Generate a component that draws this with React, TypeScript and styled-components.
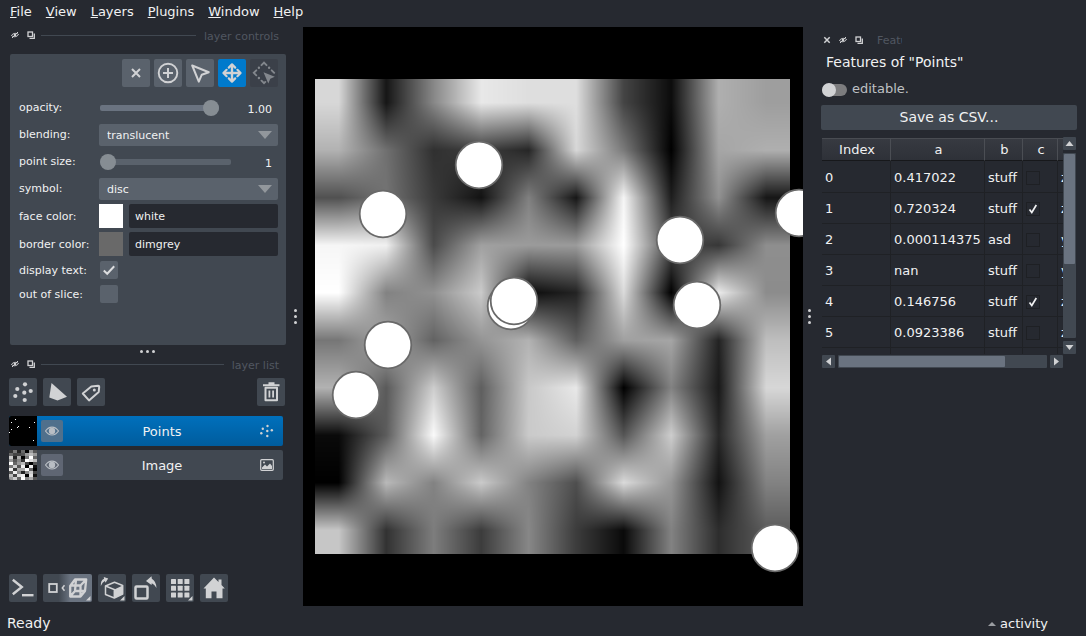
import React, { useLayoutEffect, useRef } from "react";
import styled, { createGlobalStyle, css } from "styled-components";

const c = {
  background: "#262930",
  foreground: "#414851",
  primary: "#5a626c",
  highlight: "#6a7380",
  text: "#f0f1f2",
  icon: "#d1d2d4",
  current: "#007acc",
  muted: "#515761",
};

const GlobalStyle = createGlobalStyle`
  *, *::before, *::after { box-sizing: border-box; }
  body {
    margin: 0;
    background: ${c.background};
    color: ${c.text};
    font: 13px/16px "DejaVu Sans", sans-serif;
  }
  button, input, select { font: inherit; color: inherit; margin: 0; }
  svg { display: block; }
`;

const Window = styled.div`
  display: flex;
  flex-direction: column;
  min-height: 100vh;
`;

const MenuBar = styled.nav`
  display: flex;
  height: 27px;
  padding: 3px 3px 6px;
`;

const MenuItem = styled.button`
  border: 0;
  padding: 0 7px;
  background: none;
  line-height: 18px;
`;

const Body = styled.main`
  flex: 1;
  display: flex;
`;

const Dock = styled.aside`
  flex: none;
  width: 289px;
  display: flex;
  flex-direction: column;
`;

const Handle = styled.div<{ $horizontal?: boolean }>`
  flex: none;
  display: flex;
  flex-direction: ${(p) => (p.$horizontal ? "row" : "column")};
  align-items: center;
  justify-content: center;
  gap: 3px;
  ${(p) => (p.$horizontal ? css`height: 11px; padding: 1px 0 0 5px;` : css`width: 14px; padding-right: 1px;`)}
`;

const Dot = styled.span`
  width: 3px;
  height: 3px;
  border-radius: 50%;
  background: ${c.icon};
`;

const TitleBar = styled.header`
  display: flex;
  align-items: center;
  height: 16px;
  padding: 0 10px;
  gap: 6px;
  color: ${c.muted};
  font-size: 11px;
`;

const TitleButton = styled.button`
  width: 10px;
  height: 10px;
  padding: 0;
  border: 0;
  background: none;
`;

const TitleLine = styled.span`
  flex: 1;
  height: 1px;
  margin: 0 2px 0 -1px;
  background: ${c.foreground};
`;

const TitleText = styled.span`
  padding-top: 3px;
`;

const Controls = styled.section`
  margin: 11px 3px 0 10px;
  padding: 5px 8px 41px 9px;
  border-radius: 2px;
  background: ${c.foreground};
  font-size: 11px;
`;

const ModeButtons = styled.div`
  display: flex;
  justify-content: flex-end;
  gap: 4px;
  margin-bottom: 9px;
`;

const ToolButton = styled.button<{ $tone?: "mode" | "active" | "disabled" | "split" }>`
  position: relative;
  flex: none;
  width: ${(p) => (p.$tone === "split" ? 49 : 28)}px;
  height: 28px;
  padding: 0;
  border: 0;
  border-radius: 2px;
  background: ${(p) =>
    p.$tone === "mode" ? c.primary
    : p.$tone === "active" ? c.current
    : p.$tone === "disabled" ? "#3b4049"
    : p.$tone === "split" ? `linear-gradient(90deg, ${c.foreground} 32%, ${c.highlight} 56%)`
    : c.foreground};
  color: ${(p) => (p.$tone === "disabled" ? "#83878d" : c.icon)};
`;

const Form = styled.div`
  display: grid;
  grid-template-columns: 80px minmax(0, 1fr);
  grid-template-rows: repeat(4, 23px) repeat(2, 24px) repeat(2, 20px);
  row-gap: 4px;
  align-items: center;
`;

const FieldLabel = styled.label`
  padding-top: 1px;
`;

const SliderRow = styled.div`
  display: flex;
  align-items: center;
  padding-left: 1px;
`;

const Slider = styled.input<{ $filled?: boolean }>`
  appearance: none;
  flex: 1;
  min-width: 0;
  height: 16px;
  background: none;
  &::-webkit-slider-runnable-track {
    height: 6px;
    border-radius: 2px;
    background: ${(p) => (p.$filled ? c.highlight : c.primary)};
  }
  &::-webkit-slider-thumb {
    appearance: none;
    width: 16px;
    height: 16px;
    margin-top: -5px;
    border-radius: 50%;
    background: #868d93;
  }
`;

const SliderValue = styled.output<{ $wide?: boolean }>`
  flex: none;
  width: ${(p) => (p.$wide ? 59 : 47)}px;
  padding: 5px 6px 0 0;
  text-align: right;
`;

const SelectWrap = styled.div`
  position: relative;
  align-self: end;
  height: 22px;
  &::after {
    content: "";
    position: absolute;
    right: 6px;
    top: 7px;
    border: 7px solid transparent;
    border-top: 8px solid #92979c;
    border-bottom: 0;
    pointer-events: none;
  }
`;

const Select = styled.select`
  appearance: none;
  width: 100%;
  height: 22px;
  padding: 1px 8px 0;
  border: 0;
  border-radius: 2px;
  background: ${c.primary};
`;

const ColorRow = styled.div`
  display: flex;
  gap: 6px;
`;

const Swatch = styled.button<{ $color: string }>`
  flex: none;
  width: 24px;
  height: 24px;
  padding: 0;
  border: 0;
  background: ${(p) => p.$color};
`;

const TextInput = styled.input`
  flex: 1;
  min-width: 0;
  height: 24px;
  padding: 0 6px;
  border: 0;
  border-radius: 2px;
  background: ${c.background};
`;

const TickWrap = styled.span<{ $cell?: boolean }>`
  position: relative;
  display: block;
  width: ${(p) => (p.$cell ? 14 : 18)}px;
  height: ${(p) => (p.$cell ? 14 : 18)}px;
  margin-left: ${(p) => (p.$cell ? 0 : 1)}px;
  svg { position: absolute; inset: 0; pointer-events: none; }
  input {
    appearance: none;
    display: block;
    width: 100%;
    height: 100%;
    border-radius: ${(p) => (p.$cell ? 0 : 2)}px;
    border: ${(p) => (p.$cell ? "1px solid #1e2024" : "0")};
    background: ${(p) => (p.$cell ? "transparent" : c.primary)};
  }
`;

const LayerTools = styled.div`
  display: flex;
  gap: 6px;
  margin: 6px 4px 10px 9px;
  > :last-child { margin-left: auto; }
`;

const LayerList = styled.ul`
  display: flex;
  flex-direction: column;
  gap: 4px;
  margin: 0 6px auto 9px;
  padding: 0;
  list-style: none;
`;

const LayerRow = styled.li<{ $selected?: boolean }>`
  display: flex;
  align-items: center;
  height: 30px;
  padding-right: 9px;
  border-radius: 2px;
  overflow: hidden;
  background: ${(p) => (p.$selected ? "linear-gradient(#0070bc, #005c9d)" : c.foreground)};
`;

const EyeButton = styled.button<{ $selected?: boolean }>`
  width: 22px;
  height: 22px;
  margin-left: 4px;
  padding: 0;
  border: 0;
  border-radius: 2px;
  background: ${(p) => (p.$selected ? "#50708c" : "#5f6673")};
  color: #b9bec4;
`;

const LayerName = styled.span`
  flex: 1;
  padding: 2px 0 0 1px;
  text-align: center;
`;

const ViewerButtons = styled.div`
  display: flex;
  gap: 6px;
  padding: 0 9px 4px;
`;

const Viewport = styled.section`
  flex: 1;
  min-width: 0;
  display: flex;
  align-items: center;
  justify-content: center;
  padding-right: 1px;
  background: #000;
  overflow: hidden;
`;

const Scene = styled.div`
  position: relative;
  flex: none;
  width: 475px;
  height: 475px;
  canvas { display: block; width: 100%; height: 100%; }
  svg { position: absolute; inset: 0; overflow: visible; }
`;

const Features = styled.aside`
  flex: none;
  width: 269px;
  padding: 5px 9px 0 4px;
`;

const FeaturesTitle = styled(TitleBar)`
  padding: 0;
  padding-left: 1px;
`;

const ClippedTitle = styled.span`
  width: 25px;
  margin-left: 7px;
  padding-top: 1px;
  overflow: hidden;
  white-space: nowrap;
`;

const Heading = styled.h1`
  margin: 6px 0 10px 5px;
  font-size: 14px;
  line-height: 16px;
  font-weight: 400;
`;

const ToggleLabel = styled.label`
  display: flex;
  align-items: center;
  gap: 5px;
  height: 18px;
  padding-left: 1px;
  color: #bfc1c4;
`;

const Toggle = styled.input`
  appearance: none;
  display: flex;
  align-items: center;
  width: 25px;
  height: 12px;
  margin-top: 2px;
  border-radius: 6px;
  background: #7c7c7e;
  &::before {
    content: "";
    width: 14px;
    height: 14px;
    flex: none;
    border-radius: 50%;
    background: ${c.icon};
  }
`;

const SaveButton = styled.button`
  display: block;
  width: 100%;
  height: 25px;
  margin: 7px 0;
  padding: 0 0 1px;
  border: 0;
  border-radius: 2px;
  background: ${c.foreground};
  font-size: 14px;
`;

const TableFrame = styled.div`
  display: grid;
  grid-template-columns: minmax(0, 1fr) 14px;
  grid-template-rows: 217px 14px;
  padding-left: 1px;
`;

const TableView = styled.div`
  overflow: hidden;
  padding-top: 1px;
`;

const Table = styled.table`
  table-layout: fixed;
  width: 300px;
  border-collapse: separate;
  border-spacing: 0;
  th, td {
    border-right: 1px solid #1f2125;
    border-bottom: 1px solid #1f2125;
    font-weight: 400;
    white-space: nowrap;
  }
  th {
    height: 23px;
    padding: 0 0 0 2px;
    border-top: 1px solid #494c52;
    border-right-color: #4b4e54;
    border-bottom-color: #17181b;
    background: linear-gradient(#373a41, #2e3138);
  }
  td { height: 31px; padding: 2px 0 0 3px; }
  tbody tr:first-child td { height: 32px; padding-top: 3px; }
`;

const Bar = styled.div<{ $vertical?: boolean }>`
  display: flex;
  flex-direction: ${(p) => (p.$vertical ? "column" : "row")};
  gap: 3px;
  padding-top: ${(p) => (p.$vertical ? 0 : 1)}px;
`;

const BarButton = styled.button`
  flex: none;
  width: 13px;
  height: 13px;
  padding: 0;
  border: 0;
  border-radius: 1px;
  background: ${c.foreground};
  color: ${c.icon};
`;

const BarTrack = styled.div<{ $vertical?: boolean }>`
  flex: 1;
  padding: 1px;
  background: ${c.foreground};
  border-radius: 1px;
  ${(p) => (p.$vertical ? css`width: 13px;` : css`height: 13px;`)}
  &::before {
    content: "";
    display: block;
    width: ${(p) => (p.$vertical ? "100%" : "80%")};
    height: ${(p) => (p.$vertical ? "60%" : "100%")};
    border-radius: 1px;
    background: ${c.highlight};
  }
`;

const StatusBar = styled.footer`
  display: flex;
  align-items: center;
  justify-content: space-between;
  height: 30px;
  padding: 4px 38px 0 7px;
  font-size: 14px;
`;

const Activity = styled.button`
  display: flex;
  align-items: center;
  gap: 4px;
  padding: 1px 0 0;
  border: 0;
  background: none;
  font-size: 13px;
  &::before {
    content: "";
    border: 4px solid transparent;
    border-bottom-color: #9a9da1;
    border-top: 0;
  }
`;

/* ---------- icons ---------- */

type IconProps = { w?: number; h?: number; children: React.ReactNode };

const Icon = ({ w = 28, h = 28, children }: IconProps) => (
  <svg width={w} height={h} viewBox={`0 0 ${w} ${h}`} fill="currentColor" aria-hidden="true">
    {children}
  </svg>
);

const line = { fill: "none", stroke: "currentColor", strokeWidth: 2 } as const;

const Corner = () => <path d="M26.500 22v4.500H22z" />;

const HideIcon = () => (
  <svg width="10" height="10" viewBox="0 0 10 10" fill="none" stroke={c.icon} aria-hidden="true">
    <path d="M1.500 5.500C3 3 6.500 2.700 8.500 4.500C7 7 3.500 7.500 1.500 5.500z" strokeWidth="1" />
    <circle cx="5" cy="5" r="1.300" fill={c.icon} stroke="none" />
    <path d="M2 8L8 2" strokeWidth="1" />
  </svg>
);

const FloatIcon = () => (
  <svg width="10" height="10" viewBox="0 0 10 10" fill="none" stroke={c.icon} aria-hidden="true">
    <rect x="2" y="2" width="4.500" height="4.500" strokeWidth="1.300" />
    <path d="M8.300 3.500V8.300H3.500" strokeWidth="1.300" />
  </svg>
);

const CloseIcon = () => (
  <svg width="10" height="10" viewBox="0 0 10 10" fill="none" stroke={c.icon} aria-hidden="true">
    <path d="M2.300 2.300L7.700 7.700M7.700 2.300L2.300 7.700" strokeWidth="1.500" />
  </svg>
);

const EyeIcon = () => (
  <Icon w={22} h={22}>
    <path d="M4.500 11C8 5.700 14 5.700 17.500 11C14 16.300 8 16.300 4.500 11z" {...line} strokeWidth={1.2} />
    <circle cx="11" cy="11" r="3.200" />
  </Icon>
);

const CheckIcon = ({ cell }: { cell?: boolean }) =>
  cell ? (
    <Icon w={14} h={14}>
      <path d="M3.500 7.500L5.800 10.500L10.300 3" {...line} stroke={c.text} strokeWidth={1.700} />
    </Icon>
  ) : (
    <Icon w={18} h={18}>
      <path d="M3.800 9.500L7.200 12.800L14.200 5.300" {...line} stroke="#dcdddf" strokeWidth={2} />
    </Icon>
  );

const TickBox = ({ id, label, on, cell }: { id?: string; label?: string; on?: boolean; cell?: boolean }) => (
  <TickWrap $cell={cell}>
    <input id={id} type="checkbox" defaultChecked={on} aria-label={label} />
    {on && <CheckIcon cell={cell} />}
  </TickWrap>
);

const Dots = () => (
  <>
    <Dot />
    <Dot />
    <Dot />
  </>
);

/* ---------- image layer ---------- */

const pixels = [
  [215, 22, 135, 232, 222, 222, 68, 12, 175, 158],
  [178, 112, 48, 62, 38, 215, 122, 0, 165, 175],
  [80, 115, 58, 18, 128, 22, 245, 30, 145, 22],
  [246, 240, 75, 160, 155, 155, 255, 75, 55, 142],
  [255, 130, 145, 202, 12, 35, 218, 0, 235, 140],
  [118, 165, 98, 148, 178, 95, 160, 165, 35, 190],
  [178, 90, 205, 95, 200, 232, 0, 130, 25, 215],
  [10, 92, 250, 100, 202, 210, 85, 205, 40, 160],
  [0, 185, 130, 202, 130, 78, 218, 150, 18, 130],
  [198, 50, 125, 60, 135, 60, 10, 130, 45, 92],
];

function sample(x: number, y: number) {
  const clamp = (v: number) => Math.max(0, Math.min(9, v));
  const gx = clamp(x);
  const gy = clamp(y);
  const x0 = Math.floor(gx);
  const y0 = Math.floor(gy);
  const x1 = clamp(x0 + 1);
  const y1 = clamp(y0 + 1);
  const fx = gx - x0;
  const fy = gy - y0;
  const top = pixels[y0][x0] * (1 - fx) + pixels[y0][x1] * fx;
  const bottom = pixels[y1][x0] * (1 - fx) + pixels[y1][x1] * fx;
  return top * (1 - fy) + bottom * fy;
}

const points = [
  [164, 86], [68, 135], [484, 134], [365, 161], [382, 226],
  [196, 227], [199, 222], [73, 266], [41, 316], [460, 469],
];

function ImageScene() {
  const ref = useRef<HTMLCanvasElement>(null);
  useLayoutEffect(() => {
    const ctx = ref.current?.getContext("2d");
    if (!ctx) return;
    const size = 475;
    const data = ctx.createImageData(size, size);
    for (let y = 0; y < size; y++) {
      for (let x = 0; x < size; x++) {
        const v = sample(((x + 0.5) * 10) / size - 0.5, ((y + 0.5) * 10) / size - 0.5);
        const i = (y * size + x) * 4;
        data.data[i] = data.data[i + 1] = data.data[i + 2] = v;
        data.data[i + 3] = 255;
      }
    }
    ctx.putImageData(data, 0, 0);
  }, []);
  return (
    <Scene>
      <canvas ref={ref} width={475} height={475} />
      <svg width="475" height="475" viewBox="0 0 475 475" fill="#fff" stroke="#696969" strokeWidth="1.800">
        {points.map(([x, y]) => (
          <circle key={`${x}-${y}`} cx={x} cy={y} r="23.300" />
        ))}
      </svg>
    </Scene>
  );
}

const thumbRows = [
  "3726095",
  "64459b9",
  "c2a07f6",
  "9583fdb",
  "f69b405",
  "7c5e0e1",
  "e3aaf60",
  "5e828c4",
  "b4de0d1",
  "9c6f8a5",
];

const ImageThumb = () => (
  <svg width="28" height="30" viewBox="0 0 7 10" preserveAspectRatio="none" shapeRendering="crispEdges" aria-hidden="true">
    {thumbRows.flatMap((row, y) =>
      row.split("").map((v, x) => (
        <rect key={`${x}-${y}`} x={x} y={y} width="1" height="1" fill={`#${v}${v}${v}`} />
      ))
    )}
  </svg>
);

const PointsThumb = () => (
  <svg width="28" height="30" viewBox="0 0 28 30" fill="#fff" aria-hidden="true">
    <rect width="28" height="30" fill="#000" />
    {[[6, 3], [2, 6], [25, 6], [9, 10], [8, 11], [20, 11], [2, 13], [0, 16], [24, 24]].map(([x, y]) => (
      <rect key={`${x}-${y}`} x={x} y={y} width="1" height="1" />
    ))}
  </svg>
);

/* ---------- data ---------- */

const rows = [
  { a: "0.417022", b: "stuff", on: false, d: "z" },
  { a: "0.720324", b: "stuff", on: true, d: "z" },
  { a: "0.000114375", b: "asd", on: false, d: "y" },
  { a: "nan", b: "stuff", on: false, d: "y" },
  { a: "0.146756", b: "stuff", on: true, d: "z" },
  { a: "0.0923386", b: "stuff", on: false, d: "z" },
];

const DockTitle = ({ text }: { text: string }) => (
  <TitleBar>
    <TitleButton aria-label="Hide"><HideIcon /></TitleButton>
    <TitleButton aria-label="Float"><FloatIcon /></TitleButton>
    <TitleLine />
    <TitleText>{text}</TitleText>
  </TitleBar>
);

export default function App() {
  return (
    <Window>
      <GlobalStyle />
      <MenuBar>
        {["File", "View", "Layers", "Plugins", "Window", "Help"].map((m) => (
          <MenuItem key={m}><u>{m[0]}</u>{m.slice(1)}</MenuItem>
        ))}
      </MenuBar>

      <Body>
        <Dock>
          <DockTitle text="layer controls" />
          <Controls>
            <ModeButtons>
              <ToolButton $tone="mode" aria-label="Delete selected points">
                <Icon><path d="M10 10l8 8M18 10l-8 8" {...line} strokeWidth={2} /></Icon>
              </ToolButton>
              <ToolButton $tone="mode" aria-label="Add points">
                <Icon>
                  <circle cx="14" cy="14" r="9.300" {...line} strokeWidth={1.900} />
                  <path d="M14 9v10M9 14h10" {...line} />
                </Icon>
              </ToolButton>
              <ToolButton $tone="mode" aria-label="Select points">
                <Icon>
                  <path d="M6.200 6.500L22.800 13.200L15.800 15.700L12.800 22.700z" {...line} strokeLinejoin="round" />
                </Icon>
              </ToolButton>
              <ToolButton $tone="active" aria-label="Pan/zoom">
                <Icon>
                  <path d="M14 6v16M6 14h16" {...line} strokeWidth={2.400} />
                  <path d="M10.800 8.600L14 5.400L17.200 8.600M10.800 19.400L14 22.600L17.200 19.400M8.600 10.800L5.400 14L8.600 17.200M19.400 10.800L22.600 14L19.400 17.200" {...line} strokeWidth={2.200} strokeLinecap="round" strokeLinejoin="round" />
                </Icon>
              </ToolButton>
              <ToolButton $tone="disabled" aria-label="Transform" disabled>
                <Icon>
                  <path d="M11.500 6.200L14 3.700L16.500 6.200M6.300 11.300L3.800 13.800L6.300 16.300M11.500 21.700L14 24.200L15.300 22.900M21.700 11.300L24.200 13.800" {...line} strokeWidth={1.900} strokeLinecap="round" />
                  <path d="M8.900 8.800l.01 0M19.100 8.800l.01 0M8.900 19l.01 0" {...line} strokeWidth={2.400} strokeLinecap="round" />
                  <path d="M13.500 13.300L24.800 17.800L20.300 19.700L18.300 24.500z" />
                </Icon>
              </ToolButton>
            </ModeButtons>
            <Form>
              <FieldLabel htmlFor="opacity">opacity:</FieldLabel>
              <SliderRow>
                <Slider id="opacity" type="range" min="0" max="100" defaultValue="100" $filled />
                <SliderValue $wide htmlFor="opacity">1.00</SliderValue>
              </SliderRow>
              <FieldLabel htmlFor="blending">blending:</FieldLabel>
              <SelectWrap>
                <Select id="blending"><option>translucent</option></Select>
              </SelectWrap>
              <FieldLabel htmlFor="size">point size:</FieldLabel>
              <SliderRow>
                <Slider id="size" type="range" min="1" max="100" defaultValue="1" />
                <SliderValue htmlFor="size">1</SliderValue>
              </SliderRow>
              <FieldLabel htmlFor="symbol">symbol:</FieldLabel>
              <SelectWrap>
                <Select id="symbol"><option>disc</option></Select>
              </SelectWrap>
              <FieldLabel htmlFor="face">face color:</FieldLabel>
              <ColorRow>
                <Swatch $color="#fff" aria-label="Pick face color" />
                <TextInput id="face" defaultValue="white" />
              </ColorRow>
              <FieldLabel htmlFor="border">border color:</FieldLabel>
              <ColorRow>
                <Swatch $color="#696969" aria-label="Pick border color" />
                <TextInput id="border" defaultValue="dimgrey" />
              </ColorRow>
              <FieldLabel htmlFor="display">display text:</FieldLabel>
              <TickBox id="display" on />
              <FieldLabel htmlFor="slice">out of slice:</FieldLabel>
              <TickBox id="slice" />
            </Form>
          </Controls>
          <Handle $horizontal><Dots /></Handle>
          <DockTitle text="layer list" />
          <LayerTools>
            <ToolButton aria-label="New points layer">
              <Icon>
                {[[16, 6.3], [8.3, 11], [21.7, 13], [15.3, 14.7], [6.3, 18], [15.7, 22]].map(([x, y]) => (
                  <circle key={x} cx={x} cy={y} r="2.100" />
                ))}
              </Icon>
            </ToolButton>
            <ToolButton aria-label="New shapes layer">
              <Icon><path d="M8.500 5L24 18.800L14.500 22.400L6.300 19.400z" /></Icon>
            </ToolButton>
            <ToolButton aria-label="New labels layer">
              <Icon>
                <path d="M14.300 8.500L21.200 7.800Q22.200 7.800 22.200 8.800L21.700 14L12 22.400L5.800 15.500z" {...line} strokeLinejoin="round" />
                <circle cx="17.300" cy="12" r="1.500" />
              </Icon>
            </ToolButton>
            <ToolButton aria-label="Delete selected layers">
              <Icon>
                <path d="M6 7.200h16.500M11.500 5.300h6" {...line} strokeWidth={2} />
                <path d="M8.500 9.800h11.500v12.400h-11.500z" {...line} strokeLinejoin="round" />
                <path d="M12.400 12.500v7M16.100 12.500v7" {...line} strokeWidth={1.800} />
              </Icon>
            </ToolButton>
          </LayerTools>
          <LayerList>
            <LayerRow $selected>
              <PointsThumb />
              <EyeButton $selected aria-label="Toggle Points"><EyeIcon /></EyeButton>
              <LayerName>Points</LayerName>
              <Icon w={14} h={14}>
                {[[7.500, 2], [2.800, 4.800], [11.800, 6.300], [7.300, 7], [1.300, 9.200], [7.300, 12]].map(([x, y]) => (
                  <circle key={`${x}-${y}`} cx={x} cy={y} r="1.200" fill={c.icon} />
                ))}
              </Icon>
            </LayerRow>
            <LayerRow>
              <ImageThumb />
              <EyeButton aria-label="Toggle Image"><EyeIcon /></EyeButton>
              <LayerName>Image</LayerName>
              <Icon w={14} h={14}>
                <rect x="0.700" y="1.700" width="12.600" height="10.600" rx="1" {...line} stroke={c.icon} strokeWidth={1.200} />
                <path d="M2 11V9.500L5 6.500L7 8.500L10 5.500L12 8V11z" fill={c.icon} />
                <circle cx="4" cy="4.500" r="1" fill={c.icon} />
              </Icon>
            </LayerRow>
          </LayerList>
          <ViewerButtons>
            <ToolButton aria-label="Console">
              <Icon>
                <path d="M3.800 5.800L12.800 13L3.800 20.200" {...line} strokeWidth={2.400} />
                <path d="M13 21.200h11.500" {...line} strokeWidth={2.400} />
              </Icon>
            </ToolButton>
            <ToolButton $tone="split" aria-label="Toggle 2D/3D view">
              <Icon w={49}>
                <rect x="6.200" y="10" width="7.600" height="8" {...line} strokeWidth={1.800} />
                <path d="M21.500 11.300L19.300 14L21.500 16.700" {...line} strokeWidth={1.500} />
                <path d="M27.200 12L32 5.500H43.200L42 17L37.500 22.500H27.200zM27.200 11.500H37.500V22.500M37.500 11.500L43.200 5.500M33 5.500L32 17H42M32 17L27.200 22.500" {...line} strokeWidth={2.300} strokeLinejoin="round" />
                <path d="M47.500 22v4.500H43z" />
              </Icon>
            </ToolButton>
            <ToolButton aria-label="Roll dimensions">
              <Icon>
                <path d="M7.500 12L16.500 8.200L24.700 11.500V20L16.300 24L7.500 20.500z" {...line} strokeWidth={1.500} strokeLinejoin="round" />
                <path d="M16.300 15.500L24.700 11.500V20L16.300 24z" />
                <path d="M7.500 12L16.300 15.500V24" {...line} strokeWidth={1.500} />
                <path d="M2.800 12Q2.500 6 6 4.800L5.800 3L10.200 4.500L7.500 8.800L6.900 7Q4.500 8 2.800 12z" />
                <Corner />
              </Icon>
            </ToolButton>
            <ToolButton aria-label="Transpose dimensions">
              <Icon>
                <rect x="3.500" y="12.500" width="12" height="12" rx="1" {...line} strokeWidth={2.500} />
                <path d="M14 7L19.500 2.300L19.800 4.800Q24 7 24.500 14Q22.500 10.200 19.800 9.300L19.500 11z" />
              </Icon>
            </ToolButton>
            <ToolButton aria-label="Toggle grid">
              <Icon>
                {[5, 11.7, 18.4].flatMap((y) =>
                  [5, 11.7, 18.4].map((x) => <rect key={`${x}-${y}`} x={x} y={y} width="5" height="5" rx="0.500" />)
                )}
                <Corner />
              </Icon>
            </ToolButton>
            <ToolButton aria-label="Home">
              <Icon>
                <path d="M14 3.500L18.500 8V5.500H21.500V11L24.800 14.500H22.500V24.300H16.500V17.500H11.500V24.300H5.800V14.500H3.500z" />
              </Icon>
            </ToolButton>
          </ViewerButtons>
        </Dock>
        <Handle><Dots /></Handle>

        <Viewport><ImageScene /></Viewport>

        <Handle><Dots /></Handle>
        <Features>
          <FeaturesTitle>
            <TitleButton aria-label="Close"><CloseIcon /></TitleButton>
            <TitleButton aria-label="Hide"><HideIcon /></TitleButton>
            <TitleButton aria-label="Float"><FloatIcon /></TitleButton>
            <ClippedTitle>Featu</ClippedTitle>
          </FeaturesTitle>
          <Heading>Features of "Points"</Heading>
          <ToggleLabel>
            <Toggle type="checkbox" role="switch" />
            editable.
          </ToggleLabel>
          <SaveButton>Save as CSV...</SaveButton>
          <TableFrame>
            <TableView>
              <Table>
                <colgroup>
                  <col width="69" />
                  <col width="94" />
                  <col width="38" />
                  <col width="35" />
                  <col width="64" />
                </colgroup>
                <thead>
                  <tr><th>Index</th><th>a</th><th>b</th><th>c</th><th /></tr>
                </thead>
                <tbody>
                  {rows.map((r, i) => (
                    <tr key={i}>
                      <td>{i}</td>
                      <td>{r.a}</td>
                      <td>{r.b}</td>
                      <td><TickBox cell on={r.on} label={`c, row ${i}`} /></td>
                      <td>{r.d}</td>
                    </tr>
                  ))}
                  <tr><td /><td /><td /><td /><td /></tr>
                </tbody>
              </Table>
            </TableView>
            <Bar $vertical>
              <BarButton aria-label="Scroll up"><Icon w={13} h={13}><path d="M2.500 9L6.500 4L10.500 9z" /></Icon></BarButton>
              <BarTrack $vertical />
              <BarButton aria-label="Scroll down"><Icon w={13} h={13}><path d="M2.500 4L6.500 9L10.500 4z" /></Icon></BarButton>
            </Bar>
            <Bar>
              <BarButton aria-label="Scroll left"><Icon w={13} h={13}><path d="M9 2.500L4 6.500L9 10.500z" /></Icon></BarButton>
              <BarTrack />
              <BarButton aria-label="Scroll right"><Icon w={13} h={13}><path d="M4 2.500L9 6.500L4 10.500z" /></Icon></BarButton>
            </Bar>
          </TableFrame>
        </Features>
      </Body>

      <StatusBar>
        <span>Ready</span>
        <Activity>activity</Activity>
      </StatusBar>
    </Window>
  );
}
